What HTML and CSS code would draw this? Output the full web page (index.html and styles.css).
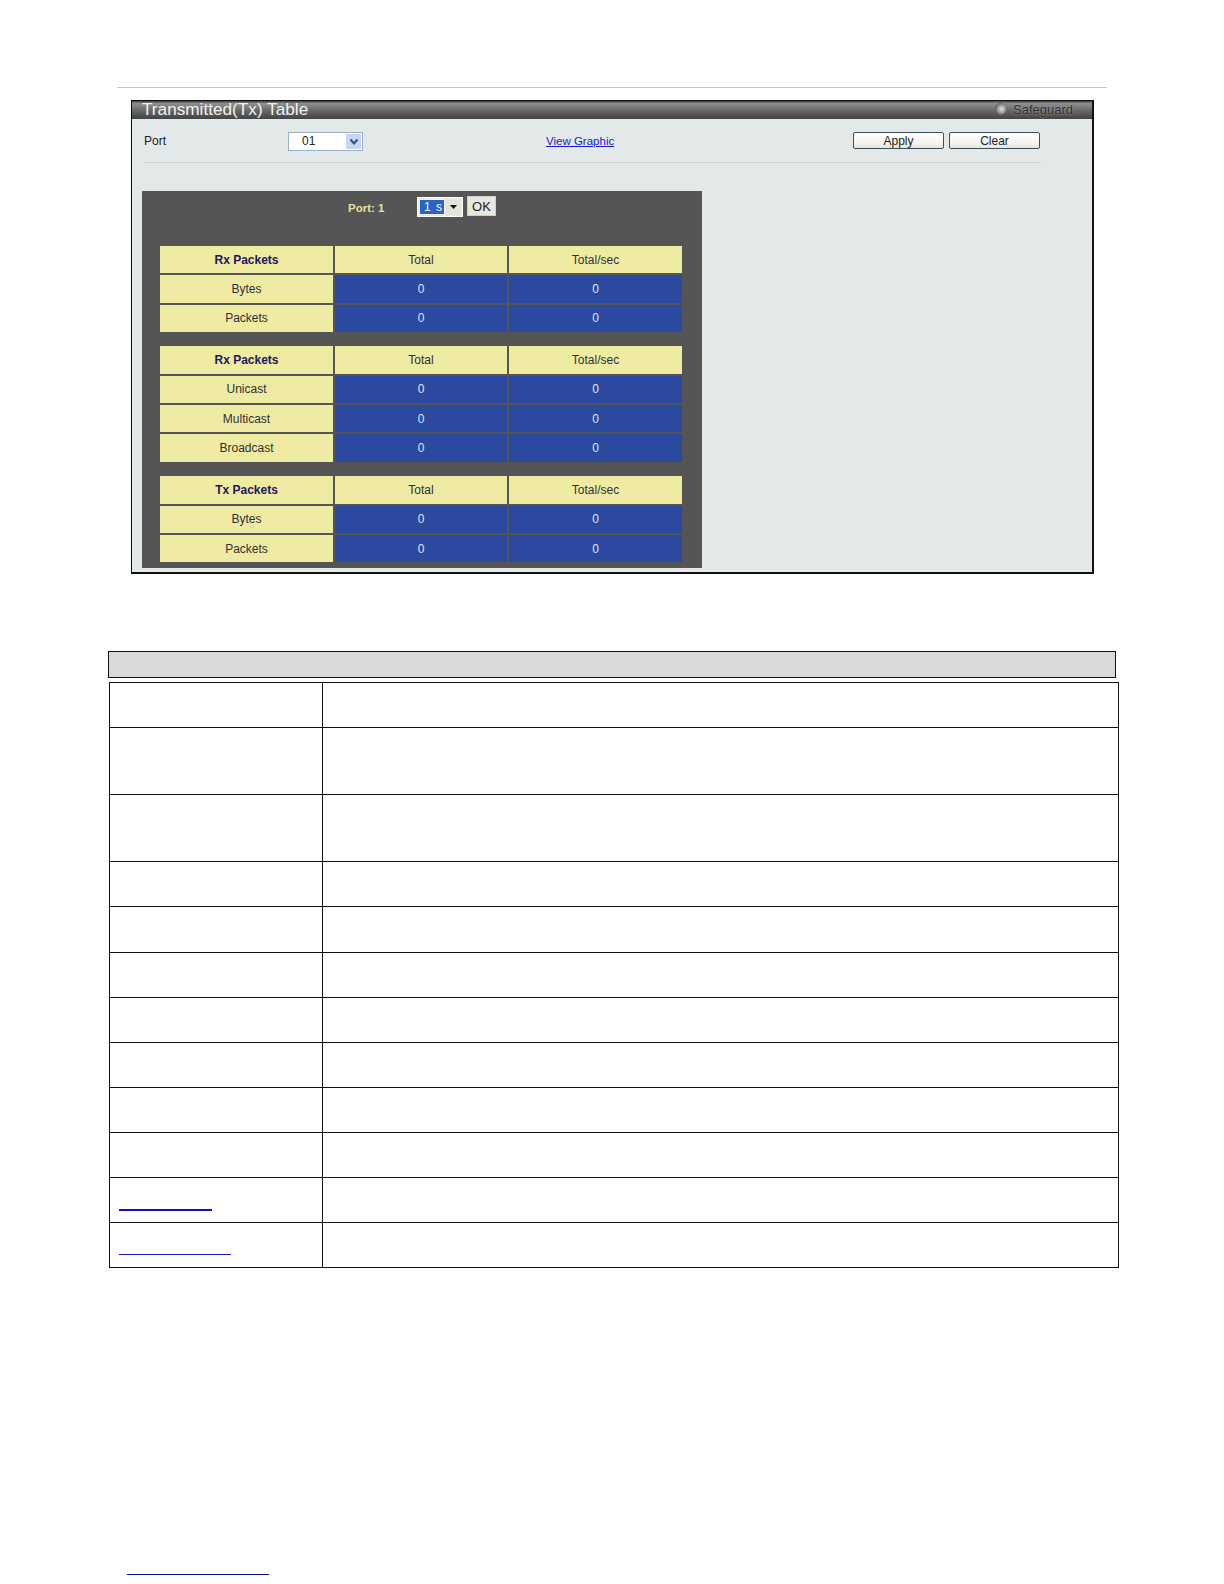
FILE: index.html
```html
<!DOCTYPE html>
<html lang="en">
<head>
<meta charset="utf-8">
<title>Transmitted(Tx) Table</title>
<link rel="stylesheet" href="styles.css">
</head>
<body>
<div class="rule"></div>
<section class="panel">
  <header class="titlebar">
    <h1 class="title">Transmitted(Tx) Table</h1>
    <div class="safeguard"><span class="led"></span><span class="sg-text">Safeguard</span></div>
  </header>
  <div class="controls">
    <span class="port-label">Port</span>
    <div class="port-select"><span class="port-value">01</span><span class="port-arrow"><svg width="10" height="8" viewBox="0 0 10 8"><path d="M1.5 1.5 5 5.5 8.5 1.5" fill="none" stroke="#2d4f8e" stroke-width="2"/></svg></span></div>
    <a class="graphic-link" href="#">View Graphic</a>
    <div class="actions"><button class="btn">Apply</button><button class="btn">Clear</button></div>
  </div>
  <div class="divider"></div>
  <div class="stats">
    <div class="stats-head">
      <span class="stats-port">Port: 1</span>
      <div class="rate-select"><span class="rate-value">1 s</span><span class="rate-arrow"><svg width="7" height="4" viewBox="0 0 7 4"><path d="M0 0H7L3.5 4Z" fill="#000"/></svg></span></div>
      <button class="ok">OK</button>
    </div>
    <div class="grid">
      <div class="cell label head">Rx Packets</div><div class="cell label">Total</div><div class="cell label">Total/sec</div>
      <div class="cell label">Bytes</div><div class="cell value">0</div><div class="cell value">0</div>
      <div class="cell label">Packets</div><div class="cell value">0</div><div class="cell value">0</div>
    </div>
    <div class="grid">
      <div class="cell label head">Rx Packets</div><div class="cell label">Total</div><div class="cell label">Total/sec</div>
      <div class="cell label">Unicast</div><div class="cell value">0</div><div class="cell value">0</div>
      <div class="cell label">Multicast</div><div class="cell value">0</div><div class="cell value">0</div>
      <div class="cell label">Broadcast</div><div class="cell value">0</div><div class="cell value">0</div>
    </div>
    <div class="grid">
      <div class="cell label head">Tx Packets</div><div class="cell label">Total</div><div class="cell label">Total/sec</div>
      <div class="cell label">Bytes</div><div class="cell value">0</div><div class="cell value">0</div>
      <div class="cell label">Packets</div><div class="cell value">0</div><div class="cell value">0</div>
    </div>
  </div>
</section>
<div class="doc-head"></div>
<div class="doc-table">
  <div class="doc-row single"><div class="doc-name"></div><div class="doc-desc"></div></div>
  <div class="doc-row double"><div class="doc-name"></div><div class="doc-desc"></div></div>
  <div class="doc-row double"><div class="doc-name"></div><div class="doc-desc"></div></div>
  <div class="doc-row single"><div class="doc-name"></div><div class="doc-desc"></div></div>
  <div class="doc-row single"><div class="doc-name"></div><div class="doc-desc"></div></div>
  <div class="doc-row single"><div class="doc-name"></div><div class="doc-desc"></div></div>
  <div class="doc-row single"><div class="doc-name"></div><div class="doc-desc"></div></div>
  <div class="doc-row single"><div class="doc-name"></div><div class="doc-desc"></div></div>
  <div class="doc-row single"><div class="doc-name"></div><div class="doc-desc"></div></div>
  <div class="doc-row single"><div class="doc-name"></div><div class="doc-desc"></div></div>
  <div class="doc-row single"><div class="doc-name"><span class="doc-link thick"></span></div><div class="doc-desc"></div></div>
  <div class="doc-row single"><div class="doc-name"><span class="doc-link wide"></span></div><div class="doc-desc"></div></div>
</div>
<div class="foot-link"></div>
</body>
</html>
```
FILE: styles.css
```css
* { box-sizing: border-box; }
html, body { margin: 0; padding: 0; background: #fff; }
body { width: 1224px; height: 1584px; padding-top: 87px; overflow: hidden; font-family: "Liberation Sans", Arial, sans-serif; color: #222; }

.rule { height: 1px; width: 990px; margin-left: 117px; background: #c8c8c8; }

.panel { width: 963px; height: 474px; margin: 12px 0 0 131px; border: 1px solid #111; border-right-width: 2px; border-bottom-width: 2px; background: #e3e8e9; }
.titlebar { height: 18px; display: flex; align-items: center; justify-content: space-between; padding: 0 19px 0 10px; background: linear-gradient(#3a3a3a, #8f8f8f 14%, #666 55%, #434343); }
.title { margin: -3px 0 0; font-size: 17.2px; font-weight: 400; line-height: 18px; height: 18px; color: #f2f2f2; overflow: hidden; }
.safeguard { display: flex; align-items: center; gap: 7px; margin-top: -2px; }
.led { width: 11px; height: 12px; border-radius: 50%; background: radial-gradient(circle at 60% 50%, #e4e4e4, #999 45%, #333 88%); }
.sg-text { font-size: 13px; color: #2e2e2e; text-shadow: 0 0 2px #b0b0b0; }

.controls { height: 43px; display: flex; align-items: flex-start; padding: 13px 52px 0 12px; font-size: 12px; }
.port-label { width: 144px; line-height: 19px; }
.port-select { width: 75px; height: 19px; display: flex; justify-content: space-between; border: 1px solid #9db0c9; background: #fff; }
.port-value { padding-left: 13px; line-height: 17px; }
.port-arrow { width: 15px; margin: 1px; display: flex; align-items: center; justify-content: center; background: #c6d6f4; }
.graphic-link { margin-left: 183px; font-size: 11.5px; line-height: 18px; color: #1a1ad6; white-space: nowrap; }
.actions { display: flex; gap: 5px; margin-left: auto; }
.btn { width: 91px; height: 17px; padding: 0; font: inherit; line-height: 14px; color: #222; border: 1px solid #3b4f63; border-radius: 2px; background: linear-gradient(#fff, #f4f3ec 70%, #e6e4d8); }

.divider { width: 897px; height: 1px; margin-left: 12px; background: #cdd4d4; }

.stats { width: 560px; height: 377px; margin: 28px 0 0 10px; padding: 0 18px; background: #555; }
.stats-head { height: 55px; display: flex; align-items: flex-start; padding-left: 188px; }
.stats-port { width: 69px; margin-top: 10px; font-size: 11.5px; font-weight: 700; line-height: 14px; color: #e6e39c; }
.rate-select { width: 46px; height: 20px; margin-top: 6px; display: flex; align-items: center; gap: 2px; padding: 0 2px; background: #e9e9e0; border: 1px solid #fff; }
.rate-value { width: 25px; height: 14px; font-size: 12px; line-height: 15px; padding-left: 4px; letter-spacing: 1px; color: #fff; background: #2a62c8; outline: 1px dotted #fff; }
.rate-arrow { width: 14px; height: 15px; display: flex; align-items: center; justify-content: center; background: #e4e3d8; }
.ok { width: 29px; height: 20px; margin: 5px 0 0 4px; padding: 0; font-size: 13px; font-family: inherit; color: #222; border: 1px solid #cfcfc6; background: #e8e8df; }

.grid { display: grid; grid-template-columns: 173px 172px 173px; grid-auto-rows: 27.33px; gap: 2px; width: 522px; margin-bottom: 14.5px; }
.cell { display: flex; align-items: center; justify-content: center; font-size: 12px; }
.label { background: #efeba2; color: #2f2f33; }
.head { font-weight: 700; color: #1d1760; }
.value { background: #2b4a9f; color: #dfe6f5; }

.doc-head { width: 1008px; height: 27.5px; margin: 76.5px 0 0 108px; border: 1.5px solid #111; background: #d9d9d9; }
.doc-table { width: 1010px; margin: 3.5px 0 0 109px; border-top: 1.5px solid #111; border-left: 1.5px solid #111; border-right: 1.5px solid #111; }
.doc-row { display: flex; border-bottom: 1.5px solid #111; }
.single { height: 45.1px; }
.double { height: 67.4px; }
.doc-name { width: 213px; display: flex; align-items: flex-end; padding: 0 0 11px 9px; border-right: 1.5px solid #111; }
.doc-desc { flex: 1; }
.doc-link { display: block; height: 1px; background: #1a1acc; }
.thick { width: 93px; height: 2px; background: #0f0fc8; }
.wide { width: 112px; margin-bottom: 1px; }

.foot-link { width: 142px; height: 1px; margin: 306.2px 0 0 127px; background: #10108c; }
```
